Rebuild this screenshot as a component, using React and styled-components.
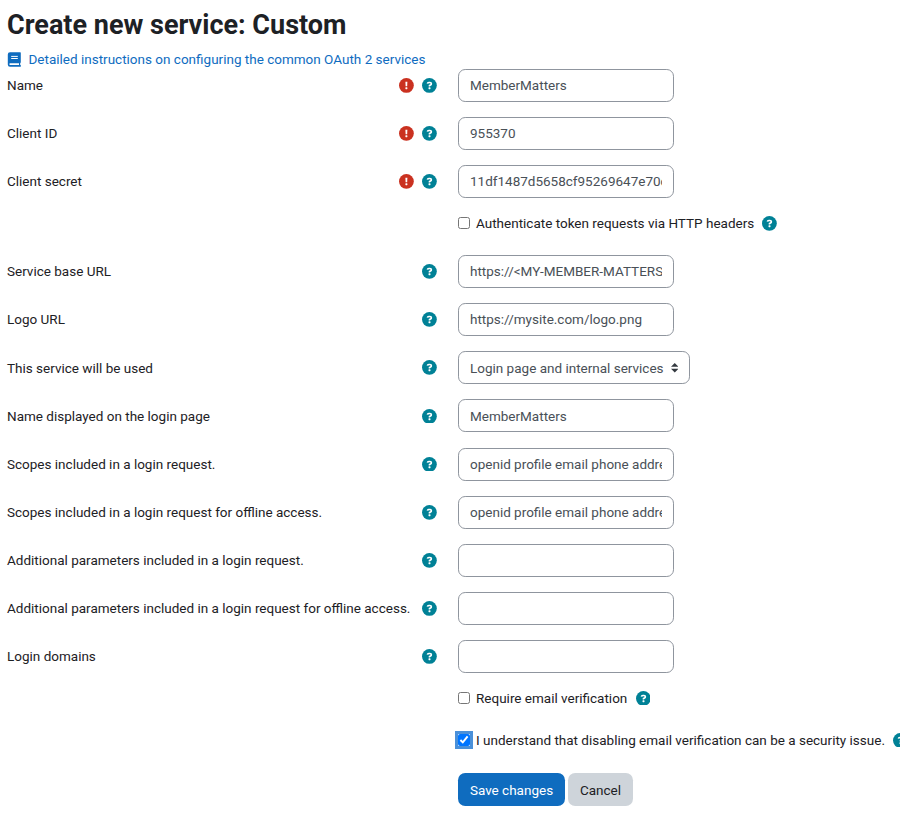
import React from "react";
import styled, { createGlobalStyle, css } from "styled-components";

const GlobalStyle = createGlobalStyle`
  *, *::before, *::after { box-sizing: border-box; }
  html, body { overflow: hidden; }
  body {
    margin: 0;
    background: #fff;
    color: #1d2125;
    font-family: Roboto, "Liberation Sans", sans-serif;
    font-size: 13.5px;
    line-height: 20px;
  }
`;

const Page = styled.main`
  width: 900px;
  height: 820px;
  padding: 9px 0 0 7px;
  overflow: hidden;
`;

const Title = styled.h1`
  margin: 0 0 7px;
  font-size: 27px;
  font-weight: 700;
  line-height: 33px;
`;

const DocLink = styled.a`
  display: flex;
  align-items: center;
  gap: 7.5px;
  height: 20px;
  color: #0f6cbf;
  text-decoration: none;
  white-space: nowrap;
  svg { width: 14px; height: 15px; }
`;

const Form = styled.form`
  display: flex;
  flex-direction: column;
`;

const Row = styled.div`
  display: grid;
  grid-template-columns: 429.6px 1fr;
  column-gap: 21.4px;
  align-items: center;
  height: 33px;
  margin-bottom: 15.1px;
`;

const LabelCell = styled.div`
  display: flex;
  align-items: center;
  justify-content: space-between;
  white-space: nowrap;
`;

const LabelText = styled.span`
  padding-bottom: 0.7px;
`;

const Marks = styled.span`
  display: flex;
  gap: 8px;
`;

const Mark = styled.span`
  display: flex;
  flex: none;
  color: ${(p) => (p.$required ? "#ca3120" : "#008196")};
  svg { width: 14.8px; height: 14.8px; }
`;

const control = css`
  height: 33px;
  border: 1px solid #8f959e;
  border-radius: 7.2px;
  background: #fff;
  color: #495057;
  font: inherit;
`;

const Input = styled.input`
  ${control}
  display: block;
  width: 216px;
  padding: 0 11px 0.6px;
  outline: none;
`;

const Select = styled.button`
  ${control}
  display: flex;
  align-items: center;
  justify-content: space-between;
  width: 232px;
  padding: 0 10.5px 0 11px;
  white-space: nowrap;
  svg { width: 7.5px; height: 9.5px; flex: none; }
`;

const CheckRow = styled.div`
  display: flex;
  align-items: center;
  height: 20px;
  margin: 0 0 ${(p) => p.$gap}px 451px;
  white-space: nowrap;
`;

const CheckLabel = styled.label`
  display: flex;
  align-items: center;
  gap: 6px;
  margin-right: 8.2px;
`;

const Checkbox = styled.input`
  width: 12px;
  height: 12px;
  margin: -1px 0 0;
  accent-color: #0075ff;
  outline: ${(p) => (p.$focused ? "3px solid #4a90d9" : "none")};
  outline-offset: 0;
`;

const Actions = styled.div`
  display: flex;
  gap: 3px;
  margin-left: 451px;
`;

const Button = styled.button`
  height: 33px;
  width: ${(p) => (p.$primary ? 107 : 65)}px;
  padding: 1px 0 0;
  border: 0;
  border-radius: 7.2px;
  background: ${(p) => (p.$primary ? "#0f6cbf" : "#ced4da")};
  color: ${(p) => (p.$primary ? "#fff" : "#1d2125")};
  font: inherit;
`;

const BookIcon = () => (
  <svg viewBox="0 0 14 15">
    <path d="M3 0.2h10.2q.6 0 .6.6v9.4q0 .6-.6.8v2h.6v1.8H3Q.8 14.800.8 12.400V2.600Q.8.2 3 .2z" fill="currentColor" />
    <path d="M3.200 11.200H12v1.800H3.200q-.9 0-.9-.9t.9-.9z" fill="#fff" />
    <path d="M4.200 4.400h6.600M4.200 6.500h6.600" stroke="#fff" strokeWidth="1" />
  </svg>
);

const Help = () => (
  <Mark>
    <svg viewBox="0 0 15 15">
      <circle cx="7.5" cy="7.5" r="7.5" fill="currentColor" />
      <path d="M5.500 5.700Q5.600 4.600 6.900 4.600H8.100Q9.500 4.600 9.500 5.900Q9.500 6.700 8.700 7.100L7.600 7.700V8.500" fill="none" stroke="#fff" strokeWidth="1.65" />
      <rect x="6.600" y="9.400" width="2" height="1.900" rx="0.500" fill="#fff" />
    </svg>
  </Mark>
);

const Required = () => (
  <Mark $required>
    <svg viewBox="0 0 15 15">
      <circle cx="7.5" cy="7.5" r="7.5" fill="currentColor" />
      <path d="M6.500 3.700h2L8.300 8.400H6.700z" fill="#fff" />
      <rect x="6.500" y="9.400" width="2" height="1.900" rx="0.500" fill="#fff" />
    </svg>
  </Mark>
);

function Field({ label, required, children }) {
  return (
    <Row>
      <LabelCell>
        <LabelText>{label}</LabelText>
        <Marks>
          {required && <Required />}
          <Help />
        </Marks>
      </LabelCell>
      <div>{children}</div>
    </Row>
  );
}

function TextField({ value, ...rest }) {
  return <Field {...rest}><Input defaultValue={value} /></Field>;
}

function CheckField({ label, gap, checked }) {
  return (
    <CheckRow $gap={gap}>
      <CheckLabel>
        <Checkbox type="checkbox" defaultChecked={checked} $focused={checked} />
        {label}
      </CheckLabel>
      <Help />
    </CheckRow>
  );
}

export default function App() {
  return (
    <Page>
      <GlobalStyle />
      <Title>Create new service: Custom</Title>
      <DocLink href="#"><BookIcon />Detailed instructions on configuring the common OAuth 2 services</DocLink>
      <Form>
        <TextField label="Name" required value="MemberMatters" />
        <TextField label="Client ID" required value="955370" />
        <TextField label="Client secret" required value="11df1487d5658cf95269647e70c3a8" />
        <CheckField label="Authenticate token requests via HTTP headers" gap={21.9} />
        <TextField label="Service base URL" value="https://<MY-MEMBER-MATTERS-URL>" />
        <TextField label="Logo URL" value="https://mysite.com/logo.png" />
        <Field label="This service will be used">
          <Select type="button">
            Login page and internal services
            <svg viewBox="0 0 8 10"><path d="M4 0 8 4H0zM0 6h8L4 10z" fill="#343a40" /></svg>
          </Select>
        </Field>
        <TextField label="Name displayed on the login page" value="MemberMatters" />
        <TextField label="Scopes included in a login request." value="openid profile email phone address" />
        <TextField label="Scopes included in a login request for offline access." value="openid profile email phone address" />
        <TextField label="Additional parameters included in a login request." value="" />
        <TextField label="Additional parameters included in a login request for offline access." value="" />
        <TextField label="Login domains" value="" />
        <CheckField label="Require email verification" gap={22} />
        <CheckField label="I understand that disabling email verification can be a security issue." checked gap={22.5} />
        <Actions>
          <Button type="button" $primary>Save changes</Button>
          <Button type="button">Cancel</Button>
        </Actions>
      </Form>
    </Page>
  );
}
